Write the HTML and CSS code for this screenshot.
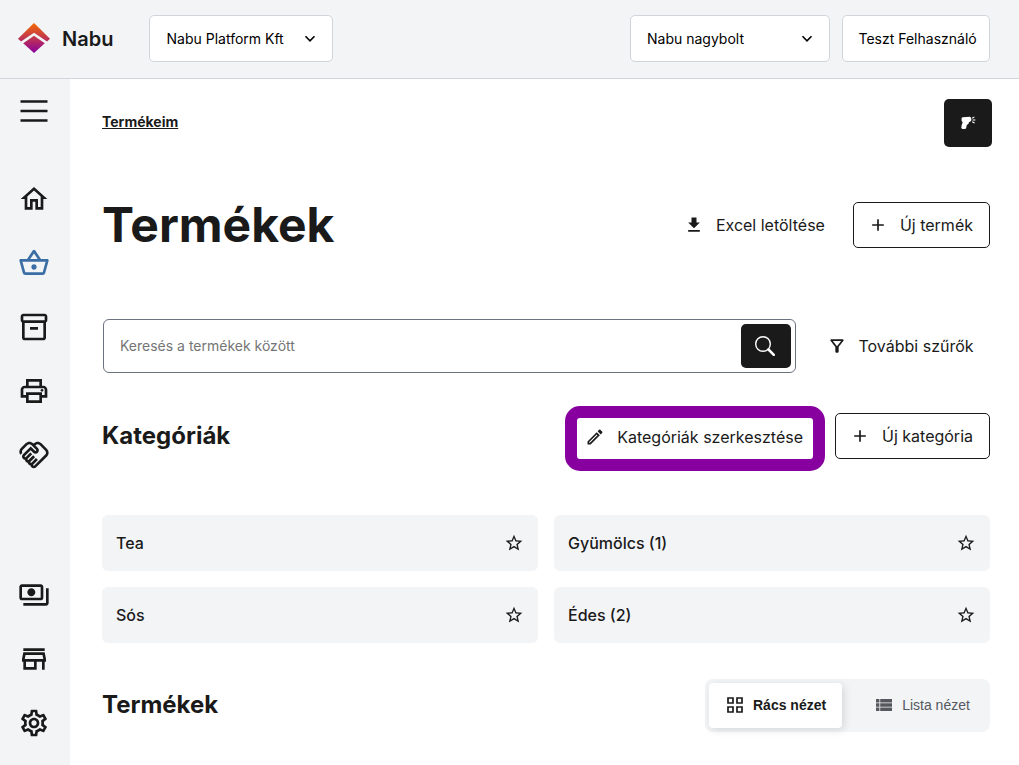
FILE: index.html
```html
<!DOCTYPE html>
<html lang="hu">
<head>
    <meta charset="UTF-8">
    <meta name="viewport" content="width=device-width, initial-scale=1.0">
    <title>Nabu - Termékek</title>
    <link rel="stylesheet" href="styles.css">
</head>
<body>
<!-- Icons used more than once -->
<svg class="sprite">
    <symbol id="chevron" viewBox="0 0 12 12"><path d="M1.500 4.300 6 8.800l4.500-4.500" fill="none" stroke="currentColor" stroke-width="1.600"/></symbol>
    <symbol id="plus" viewBox="0 0 24 24"><path d="M19 13h-6v6h-2v-6H5v-2h6V5h2v6h6v2z"/></symbol>
    <symbol id="star" viewBox="0 0 24 24"><path d="M22 9.240l-7.190-.62L12 2 9.190 8.630 2 9.240l5.460 4.730L5.820 21 12 17.270 18.180 21l-1.630-7.030L22 9.240zM12 15.400l-3.760 2.270 1-4.280-3.320-2.880 4.380-.38L12 6.100l1.710 4.040 4.380.38-3.320 2.880 1 4.280L12 15.400z"/></symbol>
</svg>

<!-- Header -->
<header class="header">
    <div class="logo">
        <svg class="logo-mark" viewBox="0 0 32 30">
            <defs>
                <linearGradient id="logo-fill" gradientUnits="userSpaceOnUse" x1="0" y1="0" x2="0" y2="30">
                    <stop offset="0" stop-color="#f56a00"/>
                    <stop offset="1" stop-color="#8b00a0"/>
                </linearGradient>
            </defs>
            <path d="M16 0 32 15.800l-3 2.600L16 9.800 3 18.400 0 15.800z" fill="url(#logo-fill)"/>
            <path d="M16 12.700 26.800 20.300 16 30 5.200 20.300z" fill="url(#logo-fill)"/>
        </svg>
        <span>Nabu</span>
    </div>
    <button class="select company">Nabu Platform Kft <svg><use href="#chevron"/></svg></button>
    <button class="select shop">Nabu nagybolt <svg><use href="#chevron"/></svg></button>
    <button class="select user">Teszt Felhasználó</button>
</header>

<div class="layout">
    <!-- Sidebar -->
    <nav class="sidebar">
        <svg class="menu-btn" viewBox="0 0 32 32"><path d="M2.500 6.500h27M2.500 16h27M2.500 25.500h27" stroke="currentColor" stroke-width="2.600"/></svg>
        <svg viewBox="0 0 24 24"><path d="M12 5.690l5 4.500V18h-2v-6H9v6H7v-7.810l5-4.500M12 3L2 12h3v8h6v-6h2v6h6v-8h3L12 3z"/></svg>
        <svg class="active" viewBox="0 0 24 24"><path d="M22 9h-4.790l-4.380-6.560c-.19-.28-.51-.42-.83-.42s-.64.14-.83.43L6.790 9H2c-.55 0-1 .45-1 1 0 .09.01.18.04.27l2.540 9.270c.23.84 1 1.460 1.920 1.460h13c.92 0 1.690-.62 1.930-1.460l2.540-9.270L23 10c0-.55-.45-1-1-1zM12 4.800L14.800 9H9.200L12 4.800zM18.500 19l-12.990.01L3.310 11H20.700l-2.200 8zM12 13c-1.100 0-2 .9-2 2s.9 2 2 2 2-.9 2-2-.9-2-2-2z"/></svg>
        <svg viewBox="0 0 24 24"><path d="M20 2H4c-1 0-2 .9-2 2v3.010c0 .72.43 1.340 1 1.690V20c0 1.100 1.100 2 2 2h14c.9 0 2-.9 2-2V8.700c.57-.35 1-.97 1-1.690V4c0-1.100-1-2-2-2zm-1 18H5V9h14v11zm1-13H4V4h16v3zM9 12h6v2H9z"/></svg>
        <svg viewBox="0 0 24 24"><path d="M19 8h-1V3H6v5H5c-1.660 0-3 1.340-3 3v6h4v4h12v-4h4v-6c0-1.660-1.340-3-3-3zM8 5h8v3H8V5zm8 14H8v-4h8v4zm2-4v-2H6v2H4v-4c0-.55.45-1 1-1h14c.55 0 1 .45 1 1v4h-2z"/><circle cx="18" cy="11.500" r="1"/></svg>
        <svg viewBox="0 0 24 24"><path d="M12.220,19.850c-0.180,0.180-0.500,0.210-0.710,0c-0.180-0.180-0.210-0.500,0-0.710l3.390-3.390l-1.410-1.410l-3.390,3.390c-0.190,0.200-0.510,0.190-0.710,0c-0.210-0.210-0.180-0.530,0-0.710l3.390-3.390l-1.410-1.410l-3.390,3.390c-0.180,0.180-0.500,0.210-0.710,0c-0.190-0.190-0.190-0.510,0-0.710l3.390-3.390L9.240,10.100l-3.390,3.390c-0.180,0.180-0.500,0.210-0.710,0c-0.190-0.200-0.190-0.510,0-0.710L9.520,8.400l1.870,1.860c0.950,0.950,2.590,0.940,3.540,0c0.980-0.980,0.980-2.560,0-3.540l-1.860-1.860l0.280-0.280c0.780-0.780,2.050-0.780,2.830,0l4.240,4.240c0.780,0.780,0.780,2.050,0,2.830L12.220,19.850z M21.830,13.070c1.560-1.560,1.560-4.090,0-5.660l-4.240-4.240c-1.560-1.560-4.090-1.560-5.660,0l-0.280,0.280l-0.280-0.280c-1.560-1.560-4.090-1.560-5.660,0L2.170,6.710C0.750,8.130,0.620,10.340,1.770,11.900l1.450-1.450C2.810,9.700,2.930,8.750,3.580,8.120l3.540-3.540c0.780-0.780,2.050-0.780,2.830,0l3.560,3.560c0.180,0.180,0.210,0.500,0,0.710c-0.210,0.210-0.530,0.180-0.710,0L9.520,5.570l-5.800,5.790c-0.980,0.970-0.980,2.560,0,3.540c0.390,0.390,0.890,0.630,1.420,0.700c0.070,0.520,0.300,1.020,0.700,1.420c0.400,0.400,0.900,0.630,1.420,0.700c0.070,0.520,0.300,1.020,0.700,1.420c0.400,0.400,0.900,0.630,1.420,0.700c0.070,0.540,0.310,1.030,0.700,1.420c0.470,0.470,1.100,0.730,1.770,0.730c0.670,0,1.300-0.260,1.770-0.730L21.830,13.070z"/></svg>

        <svg class="bottom" viewBox="0 0 24 24"><path d="M19 14V6c0-1.100-.9-2-2-2H3c-1.100 0-2 .9-2 2v8c0 1.100.9 2 2 2h14c1.100 0 2-.9 2-2zm-2 0H3V6h14v8zm-7-7c-1.660 0-3 1.340-3 3s1.340 3 3 3 3-1.340 3-3-1.340-3-3-3zm13 0v11c0 1.100-.9 2-2 2H4v-2h17V7h2z"/></svg>
        <svg viewBox="0 0 24 24"><path d="M18.360 9l.6 3H5.040l.6-3h12.720M20 4H4v2h16V4zm0 3H4l-1 5v2h1v6h10v-6h4v6h2v-6h1v-2l-1-5zM6 18v-4h6v4H6z"/></svg>
        <svg viewBox="0 0 24 24"><path d="M19.430 12.980c.04-.32.07-.64.07-.98 0-.34-.03-.66-.07-.98l2.110-1.650c.19-.15.24-.42.12-.64l-2-3.460c-.09-.16-.26-.25-.44-.25-.06 0-.12.01-.17.03l-2.490 1c-.52-.4-1.080-.73-1.690-.98l-.38-2.650C14.460 2.180 14.250 2 14 2h-4c-.25 0-.46.18-.49.42l-.38 2.650c-.61.25-1.170.59-1.690.98l-2.490-1c-.06-.02-.12-.03-.18-.03-.17 0-.34.09-.43.25l-2 3.460c-.13.22-.07.49.12.64l2.110 1.650c-.04.32-.07.65-.07.98 0 .33.03.66.07.98l-2.110 1.650c-.19.15-.24.42-.12.64l2 3.460c.09.16.26.25.44.25.06 0 .12-.01.17-.03l2.490-1c.52.4 1.080.73 1.690.98l.38 2.650c.03.24.24.42.49.42h4c.25 0 .46-.18.49-.42l.38-2.650c.61-.25 1.170-.59 1.690-.98l2.490 1c.06.02.12.03.18.03.17 0 .34-.09.43-.25l2-3.460c.12-.22.07-.49-.12-.64l-2.110-1.650zm-1.980-1.710c.04.31.05.52.05.73 0 .21-.02.43-.05.73l-.14 1.130.89.7 1.080.84-.7 1.210-1.270-.51-1.040-.42-.9.68c-.43.32-.84.56-1.250.73l-1.060.43-.16 1.130-.2 1.350h-1.400l-.19-1.350-.16-1.130-1.060-.43c-.43-.18-.83-.41-1.230-.71l-.91-.7-1.060.43-1.270.51-.7-1.210 1.080-.84.89-.7-.14-1.130c-.03-.31-.05-.54-.05-.74s.02-.43.05-.73l.14-1.130-.89-.7-1.080-.84.7-1.210 1.270.51 1.040.42.9-.68c.43-.32.84-.56 1.250-.73l1.060-.43.16-1.130.2-1.350h1.390l.19 1.350.16 1.130 1.060.43c.43.18.83.41 1.230.71l.91.7 1.060-.43 1.270-.51.7 1.210-1.070.85-.89.7.14 1.130zM12 8c-2.210 0-4 1.790-4 4s1.790 4 4 4 4-1.790 4-4-1.790-4-4-4zm0 6c-1.100 0-2-.9-2-2s.9-2 2-2 2 .9 2 2-.9 2-2 2z"/></svg>
    </nav>

    <!-- Content -->
    <main class="content">
        <div class="topline">
            <a class="breadcrumb" href="#">Termékeim</a>
            <button class="scanner-btn">
                <svg viewBox="0 0 16 16"><path d="M2.500 2.300 10 1.700 11.300 3v2.500l-1.200 1.200-1 .3-.6 1.700-1.300 1-.5.600-.6 3-1 .8H2.300l-1-1 .3-2.800L2.700 7.300 1.600 6V3z"/><path d="m12.200 3.200 2.200-1.300M12.600 5h2.800M12.200 6.700l2.400 1.300" stroke="currentColor" stroke-width="1.100"/></svg>
            </button>
        </div>

        <div class="title-row">
            <h1>Termékek</h1>
            <button class="btn download">
                <svg viewBox="0 0 24 24"><path d="M19 9h-4V3H9v6H5l7 7 7-7zM5 18v2h14v-2H5z"/></svg>
                Excel letöltése
            </button>
            <button class="btn outlined"><svg><use href="#plus"/></svg>Új termék</button>
        </div>

        <div class="search-row">
            <div class="search">
                <input type="text" placeholder="Keresés a termékek között">
                <button class="search-btn">
                    <svg viewBox="0 0 20 20"><circle cx="8" cy="8" r="7.300" fill="none" stroke="currentColor" stroke-width="1.400"/><path d="m13.500 13.500 5.300 5.300" stroke="currentColor" stroke-width="2.500" stroke-linecap="round"/></svg>
                </button>
            </div>
            <button class="btn filter">
                <svg viewBox="0 0 24 24"><path d="M7,6h10l-5.010,6.300L7,6z M4.250,5.610C6.270,8.200,10,13,10,13v6c0,0.550,0.450,1,1,1h2c0.550,0,1-0.450,1-1v-6c0,0,3.720-4.800,5.740-7.390C20.250,4.950,19.780,4,18.950,4H5.040C4.210,4,3.740,4.950,4.250,5.610z"/></svg>
                További szűrők
            </button>
        </div>

        <div class="category-head">
            <h2>Kategóriák</h2>
            <button class="btn highlighted">
                <svg viewBox="0 0 24 24"><path d="M14.060 9.020l.92.92L5.920 19H5v-.92l9.060-9.060M17.660 3c-.25 0-.51.1-.7.29l-1.830 1.830 3.750 3.750 1.830-1.830c.39-.39.39-1.020 0-1.410l-2.340-2.340c-.2-.2-.45-.29-.71-.29zm-3.600 3.190L3 17.250V21h3.750L17.810 9.940l-3.750-3.750z"/></svg>
                Kategóriák szerkesztése
            </button>
            <button class="btn outlined"><svg><use href="#plus"/></svg>Új kategória</button>
        </div>

        <div class="categories">
            <div class="category">Tea <svg><use href="#star"/></svg></div>
            <div class="category">Gyümölcs (1) <svg><use href="#star"/></svg></div>
            <div class="category">Sós <svg><use href="#star"/></svg></div>
            <div class="category">Édes (2) <svg><use href="#star"/></svg></div>
        </div>

        <div class="products-head">
            <h2>Termékek</h2>
            <div class="view-switch">
                <button class="active">
                    <svg viewBox="0 0 16 16"><path d="M1 1h5v5H1zM10 1h5v5h-5zM1 10h5v5H1zM10 10h5v5h-5z" fill="none" stroke="currentColor" stroke-width="1.700"/></svg>
                    Rács nézet
                </button>
                <button>
                    <svg viewBox="0 0 16 16"><path d="M0 2h3.400v3.500H0zM4.200 2H16v3.500H4.200zM0 6.300h3.400v3.400H0zM4.200 6.300H16v3.400H4.200zM0 10.500h3.400V14H0zM4.200 10.500H16V14H4.200z"/></svg>
                    Lista nézet
                </button>
            </div>
        </div>
    </main>
</div>
</body>
</html>
```
FILE: styles.css
```css
* {
    box-sizing: border-box;
    margin: 0;
    padding: 0;
}
body {
    font-family: 'Inter', sans-serif;
    background-color: #fff;
    color: #1a1a1a;
    height: 100vh;
    overflow: hidden;
}
button {
    font-family: inherit;
    color: inherit;
    background: none;
    border: none;
    cursor: pointer;
}
svg {
    display: block;
    flex-shrink: 0;
    fill: currentColor;
}
.sprite {
    display: none;
}

/* Header */
.header {
    display: flex;
    align-items: center;
    height: 79px;
    padding: 0 29px 2px 18px;
    background-color: #f3f4f6;
    border-bottom: 1px solid #d1d5db;
}
.logo {
    display: flex;
    align-items: center;
    gap: 12px;
    width: 131px;
    font-size: 20px;
    font-weight: 600;
}
.logo span {
    padding-top: 2px;
}
.logo-mark {
    width: 32px;
    height: 30px;
}
.select {
    display: flex;
    align-items: center;
    justify-content: space-between;
    height: 47px;
    padding: 0 16px;
    font-size: 14px;
    color: #000;
    white-space: nowrap;
    background-color: #fff;
    border: 1px solid #d1d5db;
    border-radius: 5px;
}
.select svg {
    width: 12px;
    height: 12px;
}
.company {
    width: 184px;
    padding-left: 16.5px;
}
.shop {
    width: 200px;
    margin-left: auto;
}
.user {
    width: 148px;
    margin-left: 12px;
    padding-left: 15.5px;
}

/* Sidebar */
.layout {
    display: flex;
    height: calc(100vh - 79px);
}
.sidebar {
    display: flex;
    flex-direction: column;
    gap: 32px;
    width: 70px;
    padding: 16px 18px 26px;
    background-color: #f3f4f6;
}
.sidebar svg {
    width: 32px;
    height: 32px;
}
.sidebar .menu-btn {
    margin-bottom: 24px;
}
.sidebar .active {
    color: #3b6ea5;
}
.sidebar .bottom {
    margin-top: auto;
}

/* Content */
.content {
    flex: 1;
    padding: 20px 29px 0 32px;
}
.topline {
    display: flex;
    justify-content: space-between;
    margin-right: -2px;
}
.breadcrumb {
    margin-top: 14px;
    font-size: 14px;
    line-height: 18px;
    font-weight: 700;
    color: inherit;
}
.scanner-btn {
    display: flex;
    align-items: center;
    justify-content: center;
    width: 48px;
    height: 48px;
    color: #fff;
    background-color: #1a1a1a;
    border-radius: 5px;
}
.scanner-btn svg {
    width: 16px;
    height: 16px;
}
.title-row, .category-head, .products-head {
    display: flex;
    align-items: center;
}
.title-row {
    height: 60px;
    margin-top: 48px;
}
h1 {
    margin-right: auto;
    padding-bottom: 1px;
    font-size: 48px;
    font-weight: 700;
}
h2 {
    margin-right: auto;
    padding-bottom: 2px;
    font-size: 24px;
    font-weight: 700;
}

/* Buttons */
.btn {
    display: flex;
    align-items: center;
    gap: 12px;
    height: 46px;
    font-size: 16px;
    white-space: nowrap;
}
.btn svg {
    width: 20px;
    height: 20px;
}
.outlined {
    padding: 0 16px 0 14px;
    background-color: #fff;
    border: 1px solid #1a1a1a;
    border-radius: 5px;
}
.download {
    margin-right: 28px;
}
/* Marker frame around the edit button */
.highlighted {
    height: 65px;
    margin-right: 10px;
    padding: 0 10px 3px 8px;
    border: 12px solid #87009f;
    border-radius: 15px;
}

/* Search */
.search-row {
    display: flex;
    align-items: center;
    margin-top: 64px;
    padding-left: 1px;
}
.search {
    display: flex;
    align-items: center;
    width: 693px;
    height: 54px;
    padding: 0 4px 0 16px;
    border: 1px solid #6b7280;
    border-radius: 6px;
}
.search input {
    flex: 1;
    padding-bottom: 2px;
    font-family: inherit;
    font-size: 14px;
    border: none;
    outline: none;
}
.search input::placeholder {
    color: #757575;
}
.search-btn {
    display: flex;
    align-items: center;
    justify-content: center;
    width: 50px;
    height: 44px;
    padding-right: 2px;
    color: #fff;
    background-color: #1a1a1a;
    border-radius: 5px;
}
.search-btn svg {
    width: 20px;
    height: 20px;
}
.filter {
    gap: 11.5px;
    margin-left: 31px;
}

/* Categories */
.category-head {
    height: 65px;
    margin-top: 33px;
}
.category-head h2 {
    padding-bottom: 7px;
}
.category-head .outlined {
    margin-bottom: 5px;
}
.categories {
    display: grid;
    grid-template-columns: 1fr 1fr;
    gap: 16px;
    margin-top: 44px;
}
.category {
    display: flex;
    align-items: center;
    justify-content: space-between;
    height: 56px;
    padding: 0 14px;
    font-size: 16px;
    font-weight: 500;
    background-color: #f3f4f6;
    border-radius: 6px;
}
.category svg {
    width: 20px;
    height: 20px;
}

/* Products */
.products-head {
    margin-top: 36px;
}
.view-switch {
    display: flex;
    gap: 16px;
    width: 285px;
    height: 53px;
    padding: 4px;
    background-color: #f3f4f6;
    border-radius: 8px;
}
.view-switch button {
    display: flex;
    align-items: center;
    gap: 10px;
    height: 45px;
    padding: 0 16px 1px 18px;
    font-family: 'Liberation Sans', sans-serif;
    font-size: 14px;
    color: #55585e;
    border-radius: 4px;
}
.view-switch svg {
    width: 16px;
    height: 16px;
}
.view-switch .active {
    font-weight: 700;
    color: #1a1a1a;
    background-color: #fff;
    box-shadow: 2px 2px 8px rgba(0, 0, 0, 0.12);
}
```
